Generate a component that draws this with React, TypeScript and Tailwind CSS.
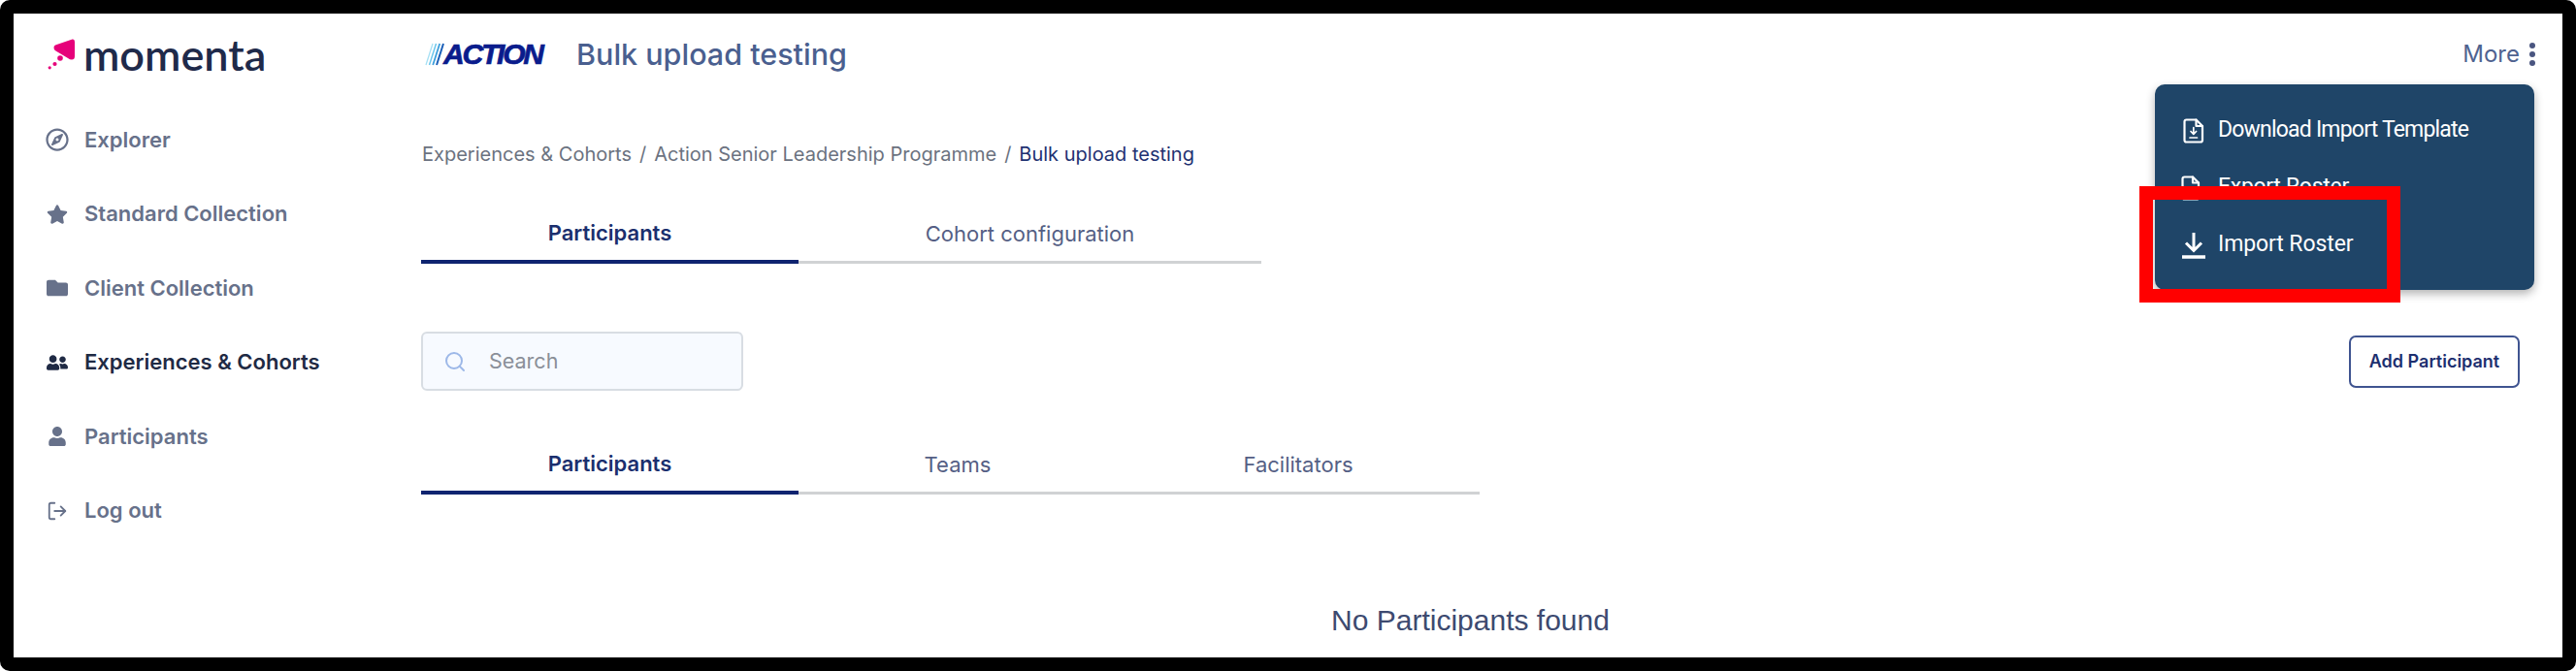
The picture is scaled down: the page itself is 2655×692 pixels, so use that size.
import React from 'react';
import { Search, LogOut } from 'lucide-react';
import { FaRegCompass, FaStar, FaFolder, FaUserFriends, FaUser } from 'react-icons/fa';

const inter = { fontFamily: 'Inter, sans-serif' };

const MomentaLogo = () => (
  <svg width="30" height="34" viewBox="0 0 30 34" className="shrink-0">
    <path d="M9 7.5 L26.5 1.5 Q29 1 29 4 L29 19 Q29 22.500 26 22.500 Q24 22.500 22 21 L9.500 13.500 Q7 11.500 7.500 9.500 Q8 8 9 7.500 Z" fill="#e6007a" />
    <circle cx="14" cy="21" r="2.800" fill="#e6007a" />
    <circle cx="8.500" cy="27" r="2.100" fill="#e6007a" />
    <circle cx="3.200" cy="30.800" r="1.600" fill="#e6007a" />
  </svg>
);

const ActionLogo = () => (
  <div className="flex items-center w-[156px] shrink-0">
    <svg width="24" height="24" viewBox="0 0 24 24" className="shrink-0">
      <path d="M1 23 L8 1" stroke="#a5e0f4" strokeWidth="1.300" />
      <path d="M4.500 23 L11.500 1" stroke="#6cc6ec" strokeWidth="1.500" />
      <path d="M8.200 23 L15.200 1" stroke="#3d9fdc" strokeWidth="1.800" />
      <path d="M12 23 L19 1" stroke="#1a5fb8" strokeWidth="2" />
    </svg>
    <span
      className="-ml-[5px] text-[30px] leading-none font-bold italic tracking-[-2.200px] text-[#0a1c8c] [-webkit-text-stroke:0.700px_#0a1c8c]"
      style={{ fontFamily: '"Liberation Sans", sans-serif' }}
    >
      ACTION
    </span>
  </div>
);

const NavItem: React.FC<{ icon: React.ReactNode; label: string; active?: boolean }> = ({ icon, label, active }) => (
  <div className={`flex items-center h-[76.500px] ${active ? 'text-[#1f2a44]' : 'text-[#67718a]'}`}>
    <div className="w-[46px] flex justify-center shrink-0 pr-[10px]">{icon}</div>
    <span className="text-[22px] font-semibold">{label}</span>
  </div>
);

const Tabs: React.FC<{ items: { label: string; width: string; active?: boolean }[] }> = ({ items }) => (
  <div className="flex">
    {items.map((t) => (
      <div
        key={t.label}
        className={`${t.width} h-[59px] flex items-center justify-center text-[22px] ${
          t.active ? 'border-b-4 border-[#0f2470] font-semibold text-[#1b2f6e]' : 'border-b-[3px] border-[#d0d2d4] text-[#555f85]'
        }`}
      >
        {t.label}
      </div>
    ))}
  </div>
);

const FileDownIcon = () => (
  <svg width="22" height="26" viewBox="0 0 22 26" fill="none" stroke="white" strokeWidth="2.200" strokeLinejoin="round" strokeLinecap="round">
    <path d="M3.500 1.500 H13.500 L20 8 V22.500 Q20 24.500 18 24.500 H3.500 Q1.500 24.500 1.500 22.500 V3.500 Q1.500 1.500 3.500 1.500 Z" />
    <path d="M13.500 1.500 V8 H20" />
    <path d="M10.800 9.500 V16 M8 13.500 L10.800 16.300 L13.600 13.500 M7 20 H14.500" strokeWidth="1.700" />
  </svg>
);

const FileExportIcon = () => (
  <svg width="26" height="26" viewBox="0 0 26 26" fill="none" stroke="white" strokeWidth="2.200" strokeLinejoin="round" strokeLinecap="round">
    <path d="M18 22.500 Q18 24.500 16 24.500 H3.500 Q1.500 24.500 1.500 22.500 V3.500 Q1.500 1.500 3.500 1.500 H12 L18 7.500 V11" />
    <path d="M12 1.500 V7.500 H18" />
    <path d="M11 16 H24 M20.500 12.500 L24 16 L20.500 19.500" />
  </svg>
);

const ImportIcon = () => (
  <svg width="26" height="28" viewBox="0 0 26 28" fill="none" stroke="white" strokeWidth="3">
    <path d="M13 1 V19 M5 11.500 L13 19.500 L21 11.500" />
    <path d="M1 26 H25" strokeWidth="3.500" />
  </svg>
);

const MenuRow: React.FC<{ icon: React.ReactNode; label: string; tracking: string }> = ({ icon, label, tracking }) => (
  <div className="flex items-center h-[59px]">
    <div className="w-[26px] flex justify-center mr-[12px]">{icon}</div>
    <span className={`text-[23px] text-white ${tracking}`} style={{ fontFamily: 'Roboto, sans-serif' }}>{label}</span>
  </div>
);

export default function App() {
  return (
    <div className="relative w-[2655px] h-[692px] overflow-hidden rounded-[10px] border-[14px] border-black bg-white flex" style={inter}>
      {/* Sidebar */}
      <aside className="w-[420px] shrink-0 pl-[27px]">
        <div className="flex items-center h-[70px] mt-[7px] mb-[15px] pl-[7px]">
          <MomentaLogo />
          <span className="ml-[8px] text-[45px] leading-none font-semibold text-[#1f2a4a]" style={{ fontFamily: 'Lato, sans-serif' }}>momenta</span>
        </div>
        <NavItem icon={<FaRegCompass size={24} />} label="Explorer" />
        <NavItem icon={<FaStar size={22} />} label="Standard Collection" />
        <NavItem icon={<FaFolder size={22} />} label="Client Collection" />
        <NavItem icon={<FaUserFriends size={22} />} label="Experiences & Cohorts" active />
        <NavItem icon={<FaUser size={20} />} label="Participants" />
        <NavItem icon={<LogOut size={22} strokeWidth={2} />} label="Log out" />
      </aside>

      {/* Main */}
      <main className="flex-1 pr-[44px]">
        <header className="flex items-center justify-between h-[84px] pl-[4px]">
          <div className="flex items-center">
            <ActionLogo />
            <h1 className="text-[30.500px] font-medium text-[#4a5f8f]">Bulk upload testing</h1>
          </div>
          <div className="flex items-center text-[#4f6390] text-[24px] -mr-[16px]">
            More
            <div className="flex flex-col gap-[3px] ml-[10px]">
              <span className="w-[6px] h-[6px] rounded-full bg-[#4a5580]" />
              <span className="w-[6px] h-[6px] rounded-full bg-[#4a5580]" />
              <span className="w-[6px] h-[6px] rounded-full bg-[#4a5580]" />
            </div>
          </div>
        </header>

        <nav className="mt-[47px] h-[28px] flex items-center text-[20px] text-[#6b7280] pl-[1px]">
          <span>Experiences &amp; Cohorts</span>
          <span className="mx-[8px]">/</span>
          <span>Action Senior Leadership Programme</span>
          <span className="mx-[8px]">/</span>
          <span className="text-[#1f3272]">Bulk upload testing</span>
        </nav>

        <div className="mt-[40px]">
          <Tabs
            items={[
              { label: 'Participants', width: 'w-[389px]', active: true },
              { label: 'Cohort configuration', width: 'w-[477px]' },
            ]}
          />
        </div>

        <div className="mt-[70px] flex items-center justify-between">
          <div className="w-[332px] h-[61px] flex items-center rounded-[6px] border-2 border-[#d8dde3] bg-[#f7faff]">
            <Search size={24} strokeWidth={2} className="ml-[21px] text-[#9db8e8]" />
            <span className="ml-[23px] text-[21.500px] text-[#8a8f98]">Search</span>
          </div>
          <button className="w-[176px] h-[54px] rounded-[7px] border-2 border-[#3f5490] bg-white text-[18px] font-semibold text-[#1d2f6f]">
            Add Participant
          </button>
        </div>

        <div className="mt-[48px]">
          <Tabs
            items={[
              { label: 'Participants', width: 'w-[389px]', active: true },
              { label: 'Teams', width: 'w-[328px]' },
              { label: 'Facilitators', width: 'w-[374px]' },
            ]}
          />
        </div>

        <p className="mt-[107px] text-center text-[30px] text-[#3d4a70]" style={{ fontFamily: '"Liberation Sans", sans-serif' }}>
          No Participants found
        </p>
      </main>

      {/* Dropdown menu */}
      <div className="absolute right-[29px] top-[73px] w-[391px] h-[212px] rounded-[10px] bg-[#1f4568] pl-[27px] pt-[18px] shadow-[0_4px_10px_rgba(0,0,0,0.3)]">
        <MenuRow icon={<FileDownIcon />} label="Download Import Template" tracking="tracking-[-0.800px]" />
        <MenuRow icon={<FileExportIcon />} label="Export Roster" tracking="tracking-[-0.300px]" />
        <MenuRow icon={<ImportIcon />} label="Import Roster" tracking="tracking-[-0.100px]" />
      </div>

      {/* Red highlight */}
      <div className="absolute left-[2191px] top-[178px] w-[269px] h-[120px] border-[14px] border-[#ff0000]" />
    </div>
  );
}
